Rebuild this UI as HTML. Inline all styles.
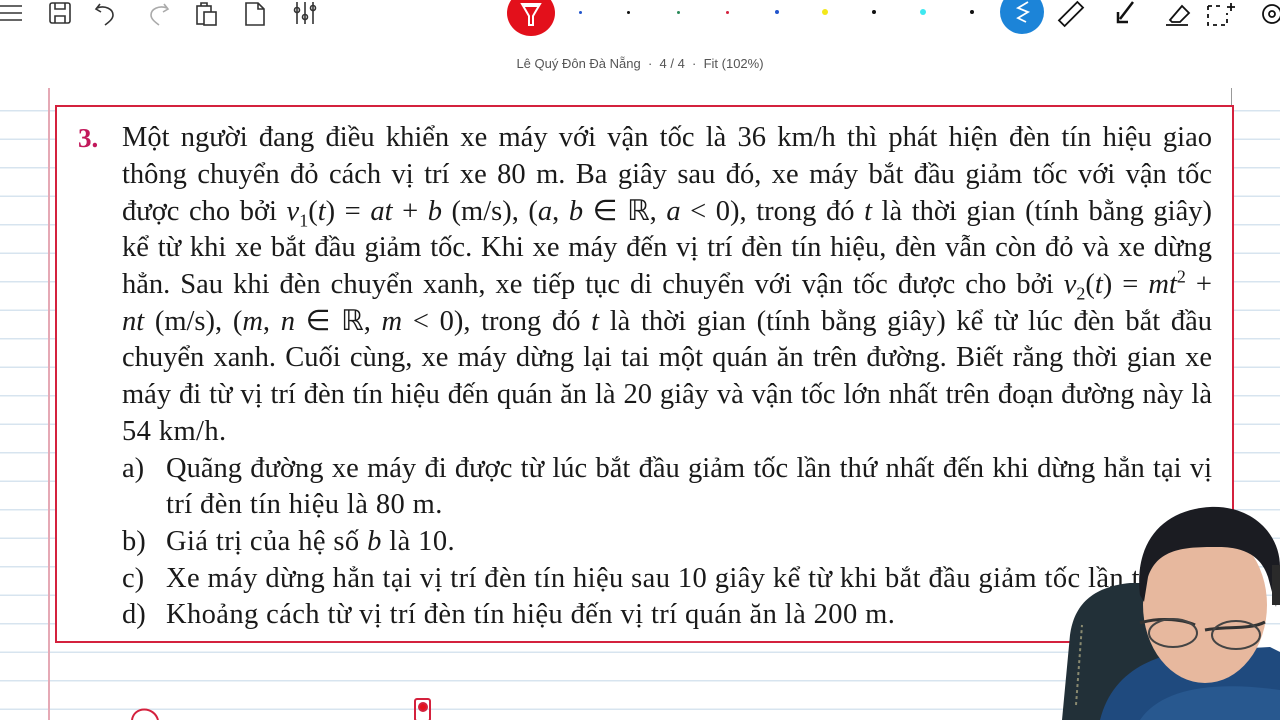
<!DOCTYPE html>
<html><head><meta charset="utf-8"><style>
*{margin:0;padding:0;box-sizing:border-box}
body{width:1280px;height:720px;overflow:hidden;position:relative;background:#fff;font-family:"Liberation Serif",serif}
.ruled{position:absolute;left:0;top:83px;width:1280px;height:637px;background:repeating-linear-gradient(to bottom,transparent 0,transparent 27px,#d7e4ef 27px,#d7e4ef 28.5px)}
.vl{position:absolute;left:48px;top:88px;width:1.5px;height:632px;background:#e5a9b5}
.vr{position:absolute;left:1231px;top:88px;width:1px;height:20px;background:#999}
.box{position:absolute;left:55px;top:105px;width:1179px;height:538px;border:2px solid #d4213d;background:#fff}
.ln{position:absolute;left:122px;width:1090px;font-size:28.5px;line-height:36.7px;color:#1a1a1a;white-space:nowrap;overflow:visible}
.j{text-align:justify;text-align-last:justify;white-space:normal;height:37px}
.ln i{font-style:italic}
sub,sup{line-height:0;font-size:18px}
.lab{position:absolute;left:122px;font-size:28.5px;line-height:36.7px;color:#1a1a1a}
.sub{left:166px;width:1046px}
.nj{letter-spacing:0.4px}
.num{position:absolute;left:78px;top:120px;font-size:27px;line-height:36.7px;color:#c2185b;font-weight:bold}
.hdr{position:absolute;top:56px;left:0;width:1280px;text-align:center;font-family:"Liberation Sans",sans-serif;font-size:13px;color:#555}
.dot{position:absolute;border-radius:50%}
</style></head><body>
<div class="ruled"></div>
<div class="vl"></div><div class="vr"></div>
<div class="hdr">Lê Quý Đôn Đà Nẵng &nbsp;·&nbsp; 4 / 4 &nbsp;·&nbsp; Fit (102%)</div>

<svg style="position:absolute;left:0;top:0" width="1280" height="40" fill="none" stroke="#333" stroke-width="1.6">
<path d="M0 6H22M0 13H22M0 20H22"/>
<rect x="50" y="3" width="20" height="20" rx="2"/><path d="M55 3v6h10V3M55 23v-7h10v7"/>
<path d="M100 4l-4 5 5 3M97 8c8-3 16 1 16 7 0 4-4 7-8 10"/>
<path stroke="#aaa" d="M164 4l4 5-5 3M167 8c-8-3-16 1-16 7 0 4 4 7 8 10"/>
<rect x="197" y="6" width="14" height="18"/><rect x="204" y="12" width="12" height="13" fill="#fff"/><path d="M201 6V3h6v3"/>
<path d="M246 3h12l6 6v16h-18z M258 3v6h6"/>
<path d="M297 2v22M305 2v22M313 2v22"/><circle cx="297" cy="10" r="2.5"/><circle cx="305" cy="17" r="2.5"/><circle cx="313" cy="8" r="2.5"/>
</svg>
<div class="dot" style="left:507px;top:-10px;width:48px;height:46px;background:#e3101b"></div>
<svg style="position:absolute;left:507px;top:0" width="48" height="36" fill="none" stroke="#fff" stroke-width="2"><path d="M15 4h18l-7 12v9h-4v-9z M17 6h14"/></svg>
<div class="dot" style="left:579px;top:11px;width:3px;height:3px;background:#2255cc"></div>
<div class="dot" style="left:627px;top:11px;width:3px;height:3px;background:#111"></div>
<div class="dot" style="left:677px;top:11px;width:3px;height:3px;background:#2a8a5a"></div>
<div class="dot" style="left:726px;top:11px;width:3px;height:3px;background:#d4213d"></div>
<div class="dot" style="left:775px;top:10px;width:4px;height:4px;background:#2255cc"></div>
<div class="dot" style="left:822px;top:9px;width:6px;height:6px;background:#f3e81a"></div>
<div class="dot" style="left:872px;top:10px;width:4px;height:4px;background:#111"></div>
<div class="dot" style="left:920px;top:9px;width:6px;height:6px;background:#3ee8f0"></div>
<div class="dot" style="left:970px;top:10px;width:4px;height:4px;background:#111"></div>
<div class="dot" style="left:1000px;top:-10px;width:44px;height:44px;background:#1c84d8"></div>
<svg style="position:absolute;left:1000px;top:0" width="280" height="36" fill="none" stroke="#111" stroke-width="1.8">
<path stroke="#fff" d="M28 2l-10 6 10 4-10 6 8 4"/>
<rect x="58" y="10" width="26" height="8" transform="rotate(-45 71 14)"/>
<path d="M133 2L120 19M118 12v10h10" stroke-width="2.5"/>
<path d="M170 20l12-14 7 7-9 9h-8zM166 25h22"/>
<path stroke-dasharray="4 4" d="M208 6h14M208 6v19h19v-12"/><path d="M231 3v8M227 7h8"/>
<circle cx="272" cy="14" r="9"/><circle cx="272" cy="14" r="3"/>
</svg>

<div class="box"></div>
<div class="num">3.</div>
<div class="ln j" style="top:120px">Một người đang điều khiển xe máy với vận tốc là 36 km/h thì phát hiện đèn tín hiệu giao</div>
<div class="ln j" style="top:157px">thông chuyển đỏ cách vị trí xe 80 m. Ba giây sau đó, xe máy bắt đầu giảm tốc với vận tốc</div>
<div class="ln j" style="top:194px">được cho bởi <i>v</i><sub>1</sub>(<i>t</i>) = <i>at</i> + <i>b</i> (m/s), (<i>a</i>, <i>b</i> ∈ ℝ, <i>a</i> &lt; 0), trong đó <i>t</i> là thời gian (tính bằng giây)</div>
<div class="ln j" style="top:230px">kể từ khi xe bắt đầu giảm tốc. Khi xe máy đến vị trí đèn tín hiệu, đèn vẫn còn đỏ và xe dừng</div>
<div class="ln j" style="top:267px">hẳn. Sau khi đèn chuyển xanh, xe tiếp tục di chuyển với vận tốc được cho bởi <i>v</i><sub>2</sub>(<i>t</i>) = <i>mt</i><sup>2</sup> +</div>
<div class="ln j" style="top:304px"><i>nt</i> (m/s), (<i>m</i>, <i>n</i> ∈ ℝ, <i>m</i> &lt; 0), trong đó <i>t</i> là thời gian (tính bằng giây) kể từ lúc đèn bắt đầu</div>
<div class="ln j" style="top:340px">chuyển xanh. Cuối cùng, xe máy dừng lại tai một quán ăn trên đường. Biết rằng thời gian xe</div>
<div class="ln j" style="top:377px">máy đi từ vị trí đèn tín hiệu đến quán ăn là 20 giây và vận tốc lớn nhất trên đoạn đường này là</div>
<div class="ln nj" style="top:414px">54 km/h.</div>
<div class="lab" style="top:451px">a)</div>
<div class="ln j sub" style="top:451px">Quãng đường xe máy đi được từ lúc bắt đầu giảm tốc lần thứ nhất đến khi dừng hẳn tại vị</div>
<div class="ln sub nj" style="top:487px">trí đèn tín hiệu là 80 m.</div>
<div class="lab" style="top:524px">b)</div>
<div class="ln sub nj" style="top:524px">Giá trị của hệ số <i>b</i> là 10.</div>
<div class="lab" style="top:561px">c)</div>
<div class="ln sub nj" style="top:561px">Xe máy dừng hẳn tại vị trí đèn tín hiệu sau 10 giây kể từ khi bắt đầu giảm tốc lần thứ</div>
<div class="lab" style="top:597px">d)</div>
<div class="ln sub nj" style="top:597px">Khoảng cách từ vị trí đèn tín hiệu đến vị trí quán ăn là 200 m.</div>

<svg style="position:absolute;left:0;top:690px" width="500" height="30" fill="none" stroke="#d4213d" stroke-width="2">
<path d="M132 30c2-14 22-14 26 0"/><rect x="415" y="9" width="15" height="22" rx="2"/><circle cx="423" cy="17" r="4" fill="#e3101b"/>
</svg>

<svg style="position:absolute;left:1040px;top:495px" width="240" height="225">
<path d="M22 225L30 140c4-30 22-48 60-52l40 0 0 137z" fill="#223038"/>
<path d="M36 210l6-80" stroke="#8a8a70" stroke-width="2" fill="none" stroke-dasharray="3 3"/>
<path d="M60 225c10-40 40-60 80-68l90-5 10 5v68z" fill="#1f4a7e"/>
<path d="M100 225c20-30 70-40 140-30v30z" fill="#28588f"/>
<ellipse cx="165" cy="110" rx="62" ry="78" fill="#e7b89e"/>
<path d="M100 100c-6-50 20-85 70-88 40-2 70 25 70 60l-4 40-8-30c-8-25-30-30-50-30-30 0-60 0-70 30l-4 25z" fill="#1b1c22"/>
<rect x="232" y="70" width="10" height="40" fill="#2a2a2a"/>
<path d="M100 128c15-5 40-5 55 2M165 135c20-4 45 0 60 -8" stroke="#333" stroke-width="3" fill="none"/>
<ellipse cx="133" cy="138" rx="24" ry="14" fill="none" stroke="#444" stroke-width="2"/>
<ellipse cx="196" cy="140" rx="24" ry="14" fill="none" stroke="#444" stroke-width="2"/>
</svg>
</body></html>
